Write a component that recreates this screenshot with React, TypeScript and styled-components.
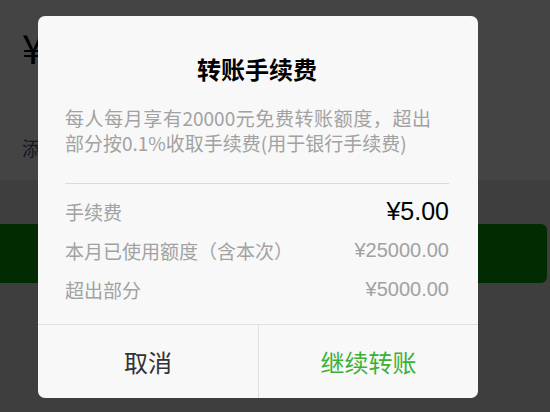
import React from "react";
import styled, { createGlobalStyle } from "styled-components";

const Global = createGlobalStyle`
  html, body { margin: 0; padding: 0; }
  body {
    width: 550px; height: 412px; overflow: hidden;
    font-family: "Noto Sans CJK SC", "Noto Sans", "Liberation Sans", sans-serif;
    background: #e4e4e8;
  }
`;

const Page = styled.div`
  position: relative;
  width: 550px;
  height: 412px;
  background: #e4e4e8;
  display: flex;
  flex-direction: column;
  overflow: hidden;
`;

const AmountCard = styled.div`
  height: 180px;
  background: #fcfcfc;
  display: flex;
  flex-direction: column;
  padding-left: 22px;
  box-sizing: border-box;
`;

const AmountRow = styled.div`
  height: 104px;
  display: flex;
  align-items: center;
  font-size: 40px;
  color: #000;
  padding-bottom: 10px;
  box-sizing: border-box;
`;

const NoteLink = styled.div`
  margin-top: 30px;
  font-size: 19px;
  color: #4a5a80;
`;

const PrimaryButton = styled.div`
  margin: 44px 3px 0 -10px;
  height: 59px;
  border-radius: 6px;
  background: #079f07;
`;

const Overlay = styled.div`
  position: absolute;
  inset: 0;
  background: rgba(0, 0, 0, 0.73);
  display: flex;
  align-items: flex-start;
  padding: 16px 0 0 38px;
`;

const Dialog = styled.div`
  width: 440px;
  height: 382px;
  background: #f8f8f8;
  border-radius: 7px;
  display: flex;
  flex-direction: column;
  overflow: hidden;
`;

const Body = styled.div`
  flex: 1;
  padding: 37px 29px 0 27px;
  display: flex;
  flex-direction: column;
`;

const Title = styled.div`
  text-align: center;
  font-size: 24px;
  line-height: 32px;
  font-weight: 700;
  color: #000;
`;

const Desc = styled.div`
  margin-top: 20px;
  width: 366px;
  font-size: 19px;
  line-height: 25px;
  color: #a2a2a2;
`;

const DescLine = styled.div<{ $justify?: boolean }>`
  text-align: ${(p) => (p.$justify ? "justify" : "left")};
  text-align-last: ${(p) => (p.$justify ? "justify" : "auto")};
  white-space: nowrap;
`;

const Separator = styled.div`
  margin-top: 28px;
  height: 1px;
  background: #dcdcdc;
`;

const Rows = styled.div`
  margin-top: 8px;
  display: flex;
  flex-direction: column;
`;

const Row = styled.div`
  height: 39px;
  display: flex;
  align-items: center;
  justify-content: space-between;
`;

const Label = styled.span`
  font-size: 19px;
  color: #a2a2a2;
`;

const Value = styled.span<{ $strong?: boolean }>`
  font-family: "Liberation Sans", "Noto Sans CJK SC", sans-serif;
  font-size: ${(p) => (p.$strong ? "25px" : "20px")};
  color: ${(p) => (p.$strong ? "#000" : "#a2a2a2")};
`;

const Footer = styled.div`
  height: 73px;
  border-top: 1px solid #e0e0e0;
  display: grid;
  grid-template-columns: 1fr 1fr;
`;

const FooterButton = styled.div<{ $primary?: boolean }>`
  display: flex;
  align-items: center;
  justify-content: center;
  font-size: 24px;
  color: ${(p) => (p.$primary ? "#3cb035" : "#333")};
  & + & { border-left: 1px solid #e0e0e0; }
`;

const rows = [
  { label: "手续费", value: "¥5.00", strong: true },
  { label: "本月已使用额度（含本次）", value: "¥25000.00" },
  { label: "超出部分", value: "¥5000.00" },
];

export default function App() {
  return (
    <>
      <Global />
      <Page>
        <AmountCard>
          <AmountRow>¥</AmountRow>
          <NoteLink>添加转账说明</NoteLink>
        </AmountCard>
        <PrimaryButton />
        <Overlay>
          <Dialog>
            <Body>
              <Title>转账手续费</Title>
              <Desc>
                <DescLine $justify>每人每月享有20000元免费转账额度，超出</DescLine>
                <DescLine>部分按0.1%收取手续费(用于银行手续费)</DescLine>
              </Desc>
              <Separator />
              <Rows>
                {rows.map((r) => (
                  <Row key={r.label}>
                    <Label>{r.label}</Label>
                    <Value $strong={r.strong}>{r.value}</Value>
                  </Row>
                ))}
              </Rows>
            </Body>
            <Footer>
              <FooterButton>取消</FooterButton>
              <FooterButton $primary>继续转账</FooterButton>
            </Footer>
          </Dialog>
        </Overlay>
      </Page>
    </>
  );
}
